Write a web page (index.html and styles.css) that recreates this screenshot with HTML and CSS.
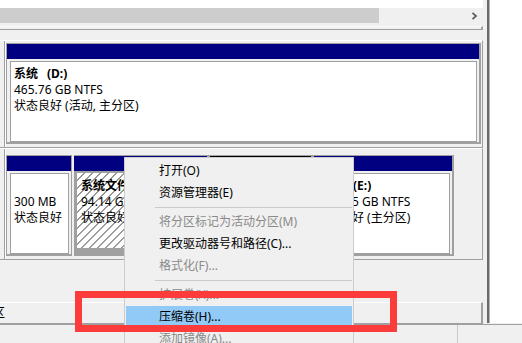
FILE: index.html
```html
<!DOCTYPE html>
<html lang="zh-CN">
<head>
<meta charset="utf-8">
<title>磁盘管理</title>
<link rel="stylesheet" href="styles.css">
</head>
<body>
<div class="app">
  <div class="main">
    <div class="left">
      <div class="list">
        <div class="list-rows"></div>
        <div class="hscroll">
          <div class="thumb"></div>
          <svg class="arrow" width="7" height="8" viewBox="0 0 7 8"><path d="M1.5 0.8 L5 4 L1.5 7.2" fill="none" stroke="#606060" stroke-width="1.8"/></svg>
        </div>
        <div class="list-edge"></div>
      </div>
      <div class="splitter"></div>
      <div class="gview">
        <div class="disk d1">
          <div class="dlabel"></div>
          <div class="parts">
            <div class="part p-d">
              <div class="hdr"></div>
              <div class="pbody">
                <div class="name">系统<span class="gap"></span>(D:)</div>
                <div>465.76 GB NTFS</div>
                <div>状态良好 (活动, 主分区)</div>
              </div>
            </div>
          </div>
        </div>
        <div class="disk d2">
          <div class="dlabel"></div>
          <div class="parts">
            <div class="part p-a">
              <div class="hdr"></div>
              <div class="pbody">
                <div>&nbsp;</div>
                <div>300 MB</div>
                <div>状态良好</div>
              </div>
            </div>
            <div class="part p-c sel">
              <div class="hdr"></div>
              <div class="pbody">
                <div class="name">系统文件</div>
                <div>94.14 GB</div>
                <div>状态良好</div>
              </div>
            </div>
            <div class="part p-u">
              <div class="hdr un"></div>
              <div class="pbody"></div>
            </div>
            <div class="part p-e">
              <div class="hdr"></div>
              <div class="pbody e-body">
                <div class="name">(E:)</div>
                <div>5 GB NTFS</div>
                <div>好 (主分区)</div>
              </div>
            </div>
          </div>
        </div>
      </div>
      <div class="legend"><span class="lg-text">区</span></div>
    </div>
    <div class="rpane"><div class="rp-inner"></div></div>
  </div>
  <div class="status">
    <div class="st-cell st-main"></div>
    <div class="st-cell"></div>
  </div>
</div>

<div class="menu">
  <div class="mi">打开(O)</div>
  <div class="mi">资源管理器(E)</div>
  <div class="sep"></div>
  <div class="mi dis">将分区标记为活动分区(M)</div>
  <div class="mi">更改驱动器号和路径(C)...</div>
  <div class="mi dis">格式化(F)...</div>
  <div class="sep"></div>
  <div class="mi dis">扩展卷(X)...</div>
  <div class="mi hl">压缩卷(H)...</div>
  <div class="mi dis">添加镜像(A)...</div>
</div>

<div class="redbox"></div>
</body>
</html>
```

FILE: styles.css
```css
* { box-sizing: border-box; margin: 0; padding: 0; }
html, body { width: 522px; height: 343px; overflow: hidden; }
body {
  position: relative;
  background: #f0f0f0;
  color: #000;
  font: 12px "Noto Sans", "Noto Sans CJK SC", sans-serif;
}

.app { width: 522px; height: 343px; display: flex; flex-direction: column; }
.main { height: 324px; display: flex; }
.left { width: 483px; display: flex; flex-direction: column; }

/* list view tail + scrollbar */
.list { height: 30px; display: flex; flex-direction: column; }
.list-rows { height: 8px; background: #fff; }
.hscroll { height: 18px; background: #f0f0f0; display: flex; align-items: flex-start; }
.thumb { width: 379px; height: 15px; background: #cdcdcd; }
.arrow { margin-left: auto; margin-right: 5px; margin-top: 4px; }
.list-edge {
  height: 4px;
  border-top: 1px solid #fbfbfb;
  border-bottom: 1px solid #a0a0a0;
  border-right: 2px solid #a0a0a0;
}
.splitter { height: 10px; }

/* graphical view */
.gview { flex: 1; }
.disk {
  display: flex;
  border-top: 1px solid #fff;
  border-bottom: 1px solid #a0a0a0;
  border-right: 1px solid #a0a0a0;
}
.dlabel { width: 5px; border-right: 1px solid #a0a0a0; }
.parts {
  flex: 1;
  display: flex;
  align-items: flex-start;
  padding-left: 1px;
  box-shadow: inset 1px 0 #fff;
}
.d1 .parts { padding-top: 2px; padding-bottom: 3px; }
.d2 .parts { padding-top: 6px; padding-bottom: 3px; }

.part {
  height: 101px;
  display: flex;
  flex-direction: column;
  flex: none;
  border: 1px solid #a0a0a0;
  border-right-width: 2px;
  border-bottom-width: 2px;
  background: #f0f0f0;
}
.hdr { height: 15px; flex: none; background: #000080; }
.hdr.un { background: #000; }
.pbody {
  flex: 1;
  margin: 2px 2px 0 3px;
  border: 1px solid #a0a0a0;
  background: #fff;
  padding: 4px 3px;
  line-height: 16px;
  white-space: nowrap;
  overflow: hidden;
}
.name { font-weight: bold; }
.gap { display: inline-block; width: 9px; }

.p-d { width: 475px; }
.p-a { width: 66px; border-right-width: 1px; margin-right: 2px; }
.p-c { width: 135px; }
.p-u { width: 104px; }
.p-e { width: 141px; }

/* visible tail of the E: volume text, right of the menu edge */
.e-body { padding-left: 34px; }
.e-body .name { padding-left: 1px; }

.sel { background: #a0a0a0; border-left: 0; }
.sel .pbody {
  margin: 2px 2px 6px 3px;
  border: 0;
  padding: 5px 4px;
  background: repeating-linear-gradient(135deg, #fff 0 4.6px, #9a9a9a 4.6px 5.66px);
}

/* legend */
.legend {
  height: 22px;
  border-top: 1px solid #fff;
  border-bottom: 1px solid #a0a0a0;
  border-right: 2px solid #a0a0a0;
  line-height: 20px;
  white-space: nowrap;
  overflow: hidden;
}
.lg-text { display: inline-block; margin-left: -7px; }

/* right pane */
.rpane { flex: 1; padding: 0 0 1px 4px; }
.rp-inner {
  height: 100%;
  background: #fff;
  border-left: 2px solid #6a6a6a;
  box-shadow: inset 1px 0 #b4b4b4;
}

/* status bar */
.status { flex: 1; display: flex; border-top: 1px solid #a0a0a0; }
.st-cell { height: 100%; }
.st-main { width: 458px; border-right: 1px solid #c8c8c8; }

/* context menu */
.menu {
  position: absolute;
  left: 124px;
  top: 157px;
  width: 230px;
  height: 186px;
  overflow: hidden;
  background: #f0f0f0;
  border: 1px solid #cccccc;
  border-bottom: 0;
  padding-top: 2px;
}
.mi {
  height: 22px;
  line-height: 22px;
  margin: 0 1px;
  padding-left: 33px;
  white-space: nowrap;
  color: #000;
}
.mi.dis { color: #8a8a8a; }
.mi.hl { background: #91c9f7; }
.sep { height: 7px; padding-top: 3px; margin: 0 1px 0 30px; }
.sep::before { content: ""; display: block; border-top: 1px solid #cacaca; }

/* annotation */
.redbox {
  position: absolute;
  left: 75px;
  top: 291px;
  width: 322px;
  height: 41px;
  border: 7px solid #fc3b3b;
}
```
